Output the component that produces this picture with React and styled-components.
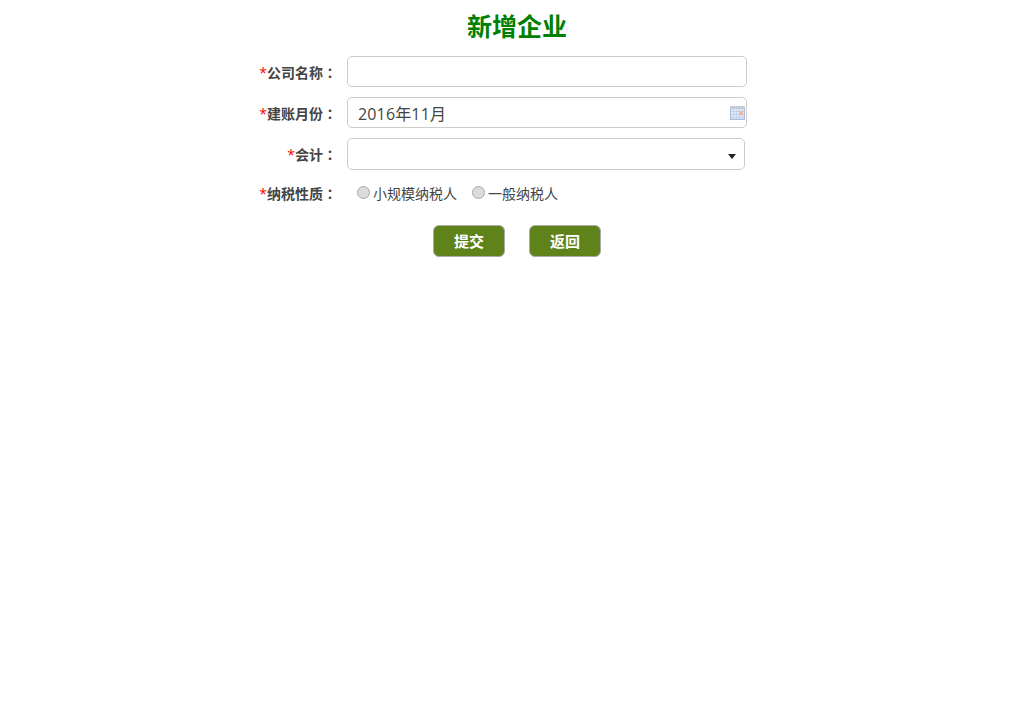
import React from 'react'
import styled, { createGlobalStyle } from 'styled-components'

const GlobalStyle = createGlobalStyle`
    html, body {
        margin: 0;
        padding: 0;
        background: #fff;
    }
    body {
        font-family: "Open Sans", "Noto Sans CJK SC", sans-serif;
        color: #444;
    }
`

const CalendarIcon = () => (
    <svg width="15" height="14" viewBox="0 0 15 14">
        <rect x="0" y="0" width="15" height="14" rx="1" fill="#dfe7f5" />
        <rect x="0" y="0" width="15" height="3" fill="#c3cbd8" />
        <path d="M0 5.5h15M0 8.5h15M0 11.5h15M3.5 3v11M6.5 3v11M9.5 3v11M12.5 3v11" stroke="#c6d3ea" strokeWidth="1" />
        <path d="M0 13.5h15M14.5 3v11M0.5 3v11" stroke="#a9bbdc" strokeWidth="1" />
        <rect x="9" y="5" width="4" height="4" fill="#f2b3a4" />
    </svg>
)

const Field = ({ label, children }) => (
    <Row>
        <Label>
            <Star>*</Star>{label}<Colon>：</Colon>
        </Label>
        {children}
    </Row>
)

const App = () => (
    <Page>
        <GlobalStyle />
        <Title>新增企业</Title>
        <Form>
            <Field label="公司名称">
                <TextBox type="text" />
            </Field>
            <Field label="建账月份">
                <DateWrap>
                    <TextBox type="text" defaultValue="2016年11月" />
                    <DateIcon><CalendarIcon /></DateIcon>
                </DateWrap>
            </Field>
            <Field label="会计">
                <SelectBox>
                    <Caret />
                </SelectBox>
            </Field>
            <RadioRow>
                <Label>
                    <Star>*</Star>纳税性质<Colon>：</Colon>
                </Label>
                <RadioGroup>
                    <RadioItem>
                        <RadioDot />
                        <RadioText>小规模纳税人</RadioText>
                    </RadioItem>
                    <RadioItem>
                        <RadioDot />
                        <RadioText>一般纳税人</RadioText>
                    </RadioItem>
                </RadioGroup>
            </RadioRow>
        </Form>
        <Actions>
            <SubmitButton>提交</SubmitButton>
            <SubmitButton>返回</SubmitButton>
        </Actions>
    </Page>
)

const Page = styled.div`
    width: 1024px;
    min-height: 726px;
    display: flex;
    flex-direction: column;
    align-items: center;
`

const Title = styled.h1`
    margin: 7px 0 1px 10px;
    height: 48px;
    line-height: 38px;
    font-size: 25px;
    font-weight: 700;
    color: #008000;
`

const Form = styled.div`
    width: 1024px;
    display: flex;
    flex-direction: column;
    gap: 10px;
`

const Row = styled.div`
    display: flex;
    align-items: center;
    height: 31px;
    &:nth-child(3) {
        height: 32px;
    }
`

const RadioRow = styled(Row)`
    height: 24px;
    margin-top: 1px;
    margin-bottom: 1px;
`

const Label = styled.label`
    width: 337px;
    flex-shrink: 0;
    margin-right: 10px;
    text-align: right;
    font-size: 14px;
    font-weight: 700;
    color: #444;
    white-space: nowrap;
`

const Colon = styled.span`
    font-family: "Noto Sans CJK TC", sans-serif;
`

const Star = styled.span`
    color: #f00;
    font-weight: 400;
`

const TextBox = styled.input`
    box-sizing: border-box;
    width: 400px;
    height: 31px;
    padding: 0 10px;
    border: 1px solid #ccc;
    border-radius: 5px;
    outline: none;
    font-family: inherit;
    font-size: 16px;
    letter-spacing: 0.15px;
    color: #444;
`

const DateWrap = styled.div`
    position: relative;
    width: 400px;
    height: 31px;
`

const DateIcon = styled.span`
    position: absolute;
    top: 9px;
    right: 2px;
    display: flex;
`

const SelectBox = styled.div`
    box-sizing: border-box;
    width: 398px;
    height: 32px;
    padding-right: 8px;
    display: flex;
    align-items: center;
    justify-content: flex-end;
    border: 1px solid #ccc;
    border-radius: 5px;
`

const Caret = styled.span`
    margin-top: 4px;
    border-left: 4px solid transparent;
    border-right: 4px solid transparent;
    border-top: 5px solid #222;
`

const RadioGroup = styled.div`
    display: flex;
    align-items: center;
    gap: 15px;
    padding-left: 10px;
`

const RadioItem = styled.div`
    display: flex;
    align-items: center;
    gap: 3px;
`

const RadioDot = styled.span`
    box-sizing: border-box;
    width: 13px;
    height: 13px;
    margin-top: -2px;
    border: 1px solid #a8a8a8;
    border-radius: 50%;
    background: #dcdcdc;
`

const RadioText = styled.span`
    font-size: 14px;
    color: #444;
`

const Actions = styled.div`
    display: flex;
    justify-content: center;
    gap: 24px;
    margin-top: 19px;
    padding-left: 10px;
`

const SubmitButton = styled.button`
    box-sizing: border-box;
    width: 72px;
    height: 32px;
    padding: 0 0 2px;
    border: 1px solid #aaa;
    border-radius: 6px;
    background: #5f831a;
    font-family: inherit;
    font-size: 15px;
    font-weight: 700;
    color: #fff;
`

export default App
